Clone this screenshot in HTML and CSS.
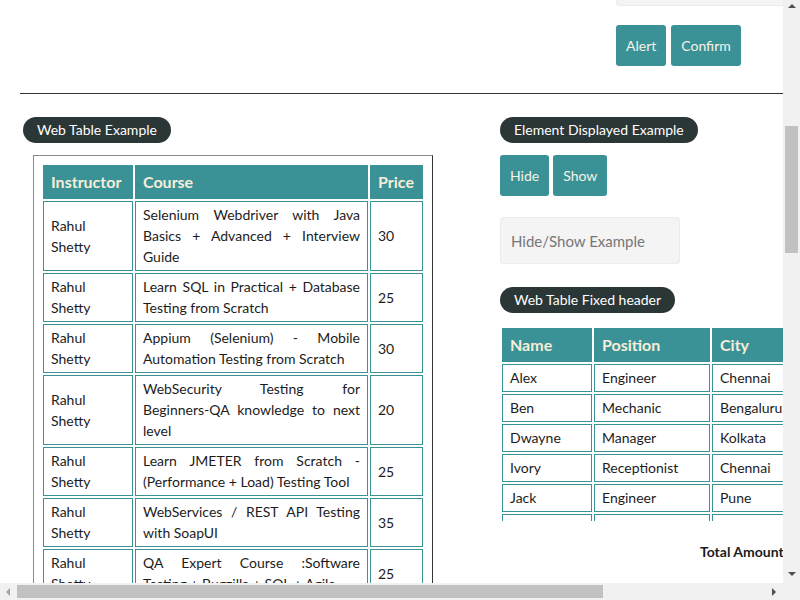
FILE: index.html
```html
<!DOCTYPE html>
<html lang="en">
<head>
<meta charset="utf-8">
<title>Practice Page</title>
<link rel="stylesheet" href="styles.css">
</head>
<body>
<div class="page">
  <div class="row top-row">
    <div class="col"></div>
    <div class="col">
      <div class="pill">Switch To Alert Example</div>
      <div class="alert-body">
        <input class="field field-name" type="text" placeholder="Enter Your Name">
        <div class="btn-row btn-row-alert">
          <button class="btn" type="button">Alert</button>
          <button class="btn" type="button">Confirm</button>
        </div>
      </div>
    </div>
  </div>

  <hr class="divider">

  <div class="row">
    <div class="col">
      <div class="pill pill-left">Web Table Example</div>
      <div class="table-box">
        <table class="courses">
          <thead>
            <tr><th class="c-ins">Instructor</th><th class="c-course">Course</th><th class="c-price">Price</th></tr>
          </thead>
          <tbody>
            <tr><td>Rahul Shetty</td><td class="course"><span class="ln">Selenium Webdriver with Java</span> <span class="ln">Basics + Advanced + Interview</span> <span class="ln">Guide</span></td><td>30</td></tr>
            <tr><td>Rahul Shetty</td><td class="course"><span class="ln">Learn SQL in Practical + Database</span> <span class="ln">Testing from Scratch</span></td><td>25</td></tr>
            <tr><td>Rahul Shetty</td><td class="course"><span class="ln">Appium (Selenium) - Mobile</span> <span class="ln">Automation Testing from Scratch</span></td><td>30</td></tr>
            <tr><td>Rahul Shetty</td><td class="course"><span class="ln">WebSecurity Testing for</span> <span class="ln">Beginners-QA knowledge to next</span> <span class="ln">level</span></td><td>20</td></tr>
            <tr><td>Rahul Shetty</td><td class="course"><span class="ln">Learn JMETER from Scratch -</span> <span class="ln">(Performance + Load) Testing Tool</span></td><td>25</td></tr>
            <tr><td>Rahul Shetty</td><td class="course"><span class="ln">WebServices / REST API Testing</span> <span class="ln">with SoapUI</span></td><td>35</td></tr>
            <tr><td>Rahul Shetty</td><td class="course"><span class="ln">QA Expert Course :Software</span> <span class="ln">Testing + Bugzilla + SQL + Agile</span></td><td>25</td></tr>
            <tr><td>Rahul Shetty</td><td class="course">Master Selenium Automation in simple Python Language</td><td>25</td></tr>
            <tr><td>Rahul Shetty</td><td class="course">Advanced Selenium Framework Pageobject, TestNG, Maven, Jenkins,Jira</td><td>20</td></tr>
            <tr><td>Rahul Shetty</td><td class="course">Write effective QA Resume that will turn to interview call</td><td>0</td></tr>
          </tbody>
        </table>
      </div>
    </div>

    <div class="col">
      <div class="pill">Element Displayed Example</div>
      <div class="btn-row btn-row-show">
        <button class="btn" type="button">Hide</button>
        <button class="btn" type="button">Show</button>
      </div>
      <input class="field field-show" type="text" placeholder="Hide/Show Example">

      <div class="pill pill-fixed">Web Table Fixed header</div>
      <div class="fix-head">
        <table class="people">
          <thead>
            <tr><th class="p-name">Name</th><th class="p-pos">Position</th><th class="p-city">City</th><th class="p-amt">Amount</th></tr>
          </thead>
          <tbody>
            <tr><td>Alex</td><td>Engineer</td><td>Chennai</td><td>28</td></tr>
            <tr><td>Ben</td><td>Mechanic</td><td>Bengaluru</td><td>23</td></tr>
            <tr><td>Dwayne</td><td>Manager</td><td>Kolkata</td><td>48</td></tr>
            <tr><td>Ivory</td><td>Receptionist</td><td>Chennai</td><td>18</td></tr>
            <tr><td>Jack</td><td>Engineer</td><td>Pune</td><td>32</td></tr>
            <tr><td>Joe</td><td>Postman</td><td>Chennai</td><td>46</td></tr>
            <tr><td>Raymond</td><td>Businessman</td><td>Mumbai</td><td>37</td></tr>
            <tr><td>Ronaldo</td><td>Sportsman</td><td>Chennai</td><td>31</td></tr>
            <tr><td>Smith</td><td>Cricketer</td><td>Delhi</td><td>33</td></tr>
          </tbody>
        </table>
      </div>
      <div class="total">Total Amount Collected: 296</div>
    </div>
  </div>
</div>

<div class="sb sb-v" aria-hidden="true">
  <span class="arrow arrow-up"></span>
  <span class="thumb thumb-v"></span>
  <span class="arrow arrow-down"></span>
</div>
<div class="sb sb-h" aria-hidden="true">
  <span class="arrow arrow-left"></span>
  <span class="thumb thumb-h"></span>
  <span class="arrow arrow-right"></span>
</div>
<div class="sb-corner" aria-hidden="true"></div>

<script src="script.js"></script>
</body>
</html>
```

FILE: styles.css
```css
* { box-sizing: border-box; }

html, body { margin: 0; padding: 0; }

body {
  font-family: Lato, "Liberation Sans", sans-serif;
  font-size: 14px;
  line-height: 21px;
  color: #1c1c1c;
  background: #fff;
}

.page {
  width: 1000px;
  min-height: 2520px;
  padding: 419px 20px 0;
}

.row {
  display: grid;
  grid-template-columns: 480px 480px;
}

.col {
  display: flex;
  flex-direction: column;
  align-items: flex-start;
}

.pill {
  background: #2b3636;
  color: #fff;
  border-radius: 14px;
  padding: 3px 14px;
  font-size: 14px;
  line-height: 20px;
  white-space: nowrap;
}

.row + .divider + .row .pill:first-child { margin-top: 23px; }
.pill-left { margin-left: 3px; }

.alert-body {
  margin: 14px 0 0 116px;
  display: flex;
  flex-direction: column;
  align-items: flex-start;
}

.field {
  height: 47px;
  background: #f4f4f4;
  border: 1px solid #ececec;
  border-radius: 3px;
  padding: 0 10px;
  font-family: Lato, "Liberation Sans", sans-serif;
  font-size: 15px;
  color: #222;
  outline: none;
}
.field::placeholder { color: #777; }

.field-name { width: 240px; }
.field-show { width: 180px; margin-top: 21px; }

.btn-row {
  display: flex;
  gap: 4px;
}
.btn-row-alert { margin-top: 19px; gap: 5px; }
.btn-row-show { margin-top: 12px; }

.btn {
  height: 41px;
  padding: 0 10px;
  background: #3a9296;
  color: #f6f3ea;
  border: 0;
  border-radius: 3px;
  font-family: Lato, "Liberation Sans", sans-serif;
  font-size: 14px;
}

.divider {
  margin: 27px 0 0;
  height: 0;
  border: 0;
  border-top: 1px solid #333;
}

.table-box {
  margin: 12px 0 0 13px;
  width: 400px;
  border: 1px solid #8a8a8a;
  border-right-color: #333;
  border-bottom-color: #333;
  padding: 7px;
}

.courses, .people {
  border-collapse: separate;
  border-spacing: 2px;
  table-layout: fixed;
}
.courses { width: 384px; }

.courses th, .people th {
  background: #3a9296;
  color: #f6eed8;
  font-size: 16px;
  line-height: 24px;
  font-weight: 700;
  text-align: left;
  padding: 4px 7px;
  border: 1px solid #3a9296;
}

.courses td, .people td {
  border: 1px solid #3a9296;
  padding: 2px 7px 3px;
  vertical-align: middle;
}

.courses td.course { text-align: justify; }

.ln {
  display: block;
  text-align: justify;
  text-align-last: justify;
  white-space: nowrap;
}
.ln:last-child {
  text-align: left;
  text-align-last: auto;
}

.c-ins { width: 90px; }
.c-course { width: 233px; }
.c-price { width: 53px; }

.pill-fixed { margin-top: 23px; }

.fix-head {
  margin-top: 13px;
  width: 480px;
  height: 195px;
  overflow-y: auto;
}

.people { width: 463px; }
.people th { position: sticky; top: 0; }
.p-name { width: 90px; }
.p-pos { width: 116px; }
.p-city { width: 120px; }

.total {
  margin: 20px 0 0 200px;
  font-weight: 700;
  white-space: nowrap;
}

/* browser scrollbars (page is scrolled to x=0, y=500) */
.sb {
  position: fixed;
  background: #f1f1f1;
  z-index: 10;
}
.sb-v {
  top: 0;
  right: 0;
  width: 17px;
  height: 583px;
}
.sb-h {
  left: 0;
  bottom: 0;
  width: 783px;
  height: 17px;
}
.sb-corner {
  position: fixed;
  right: 0;
  bottom: 0;
  width: 17px;
  height: 17px;
  background: #f1f1f1;
  z-index: 10;
}
.thumb {
  position: absolute;
  background: #c1c1c1;
}
.thumb-v {
  left: 2px;
  top: 126px;
  width: 13px;
  height: 127px;
}
.thumb-h {
  top: 2px;
  left: 17px;
  width: 586px;
  height: 13px;
}
.arrow {
  position: absolute;
  width: 0;
  height: 0;
  border: 4px solid transparent;
}
.arrow-up {
  left: 4.5px;
  top: 4px;
  border-width: 0 4px 4px;
  border-bottom-color: #505050;
}
.arrow-down {
  left: 4.5px;
  bottom: 7px;
  border-width: 4px 4px 0;
  border-top-color: #505050;
}
.arrow-left {
  left: 6px;
  top: 4.5px;
  border-width: 4px 4px 4px 0;
  border-right-color: #a3a3a3;
}
.arrow-right {
  right: 7px;
  top: 4.5px;
  border-width: 4px 0 4px 4px;
  border-left-color: #505050;
}
```

FILE: script.js
```js
window.scrollTo(0, 500);
window.addEventListener('load', function () {
  window.scrollTo(0, 500);
});
```
